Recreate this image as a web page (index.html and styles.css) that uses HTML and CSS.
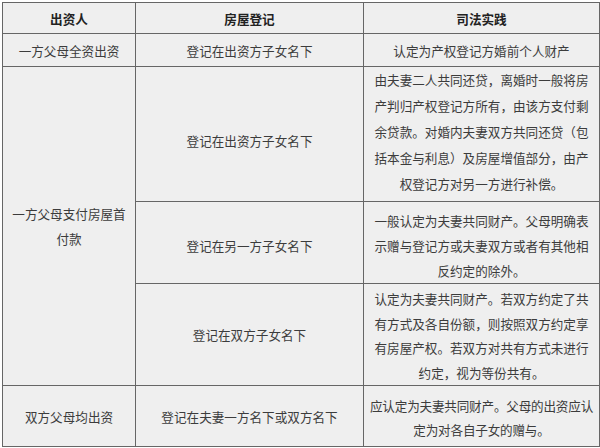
FILE: index.html
```html
<!DOCTYPE html>
<html lang="zh-CN">
<head>
<meta charset="utf-8">
<title>父母出资购房</title>
<link rel="stylesheet" href="styles.css">
</head>
<body>
<table class="grid">
  <colgroup>
    <col class="c1">
    <col class="c2">
    <col class="c3">
  </colgroup>
  <thead>
    <tr class="r-head">
      <th>出资人</th>
      <th>房屋登记</th>
      <th>司法实践</th>
    </tr>
  </thead>
  <tbody>
    <tr class="r-1">
      <td>一方父母全资出资</td>
      <td class="reg">登记在出资方子女名下</td>
      <td>认定为产权登记方婚前个人财产</td>
    </tr>
    <tr class="r-2a">
      <td rowspan="3" class="narrow">一方父母支付房屋首付款</td>
      <td class="reg">登记在出资方子女名下</td>
      <td class="wide">由夫妻二人共同还贷，离婚时一般将房产判归产权登记方所有，由该方支付剩余贷款。对婚内夫妻双方共同还贷（包括本金与利息）及房屋增值部分，由产权登记方对另一方进行补偿。</td>
    </tr>
    <tr class="r-2b">
      <td class="reg">登记在另一方子女名下</td>
      <td class="wide">一般认定为夫妻共同财产。父母明确表示赠与登记方或夫妻双方或者有其他相反约定的除外。</td>
    </tr>
    <tr class="r-2c">
      <td class="reg">登记在双方子女名下</td>
      <td class="wide">认定为夫妻共同财产。若双方约定了共有方式及各自份额，则按照双方约定享有房屋产权。若双方对共有方式未进行约定，视为等份共有。</td>
    </tr>
    <tr class="r-3">
      <td>双方父母均出资</td>
      <td class="reg">登记在夫妻一方名下或双方名下</td>
      <td class="wide">应认定为夫妻共同财产。父母的出资应认<br>定为对各自子女的赠与。</td>
    </tr>
  </tbody>
</table>
</body>
</html>
```

FILE: styles.css
```css
html, body {
  margin: 0;
  padding: 0;
  background: #ffffff;
}
body {
  padding: 2px 1px 0 2px;
  font-family: "Noto Sans CJK SC", "Noto Sans", sans-serif;
}
.grid {
  width: 597px;
  border-collapse: collapse;
  table-layout: fixed;
  background: #efefef;
  color: #3c3c3c;
  font-size: 12.6px;
  line-height: 25px;
}
.c1 { width: 133px; }
.c2 { width: 228px; }
.c3 { width: 236px; }
.grid th,
.grid td {
  border: 1px solid #666666;
  text-align: center;
  vertical-align: middle;
  padding: 0 6px;
}
.grid th {
  font-weight: bold;
  color: #222222;
}
.grid td.wide {
  padding-left: 9px;
  padding-right: 9px;
}
.grid td.narrow {
  padding: 0 6px;
}

.r-head { height: 31px; }
.r-1 { height: 33px; }
.r-2a { height: 135px; }
.r-2b { height: 82px; }
.r-2c { height: 102px; }
.r-3 { height: 61px; }

.r-2a td.reg { padding-top: 12px; }
.r-2a td.wide {
  line-height: 26px;
  padding-bottom: 4px;
}
.r-2b td.reg { padding-top: 6px; }
.r-2b td.wide { padding-top: 6px; }
.r-2c td.wide {
  line-height: 24.5px;
  padding-top: 3px;
}
.grid .r-3 td.wide {
  letter-spacing: -0.2px;
  line-height: 24px;
  padding: 4px 3px 0;
}
```
